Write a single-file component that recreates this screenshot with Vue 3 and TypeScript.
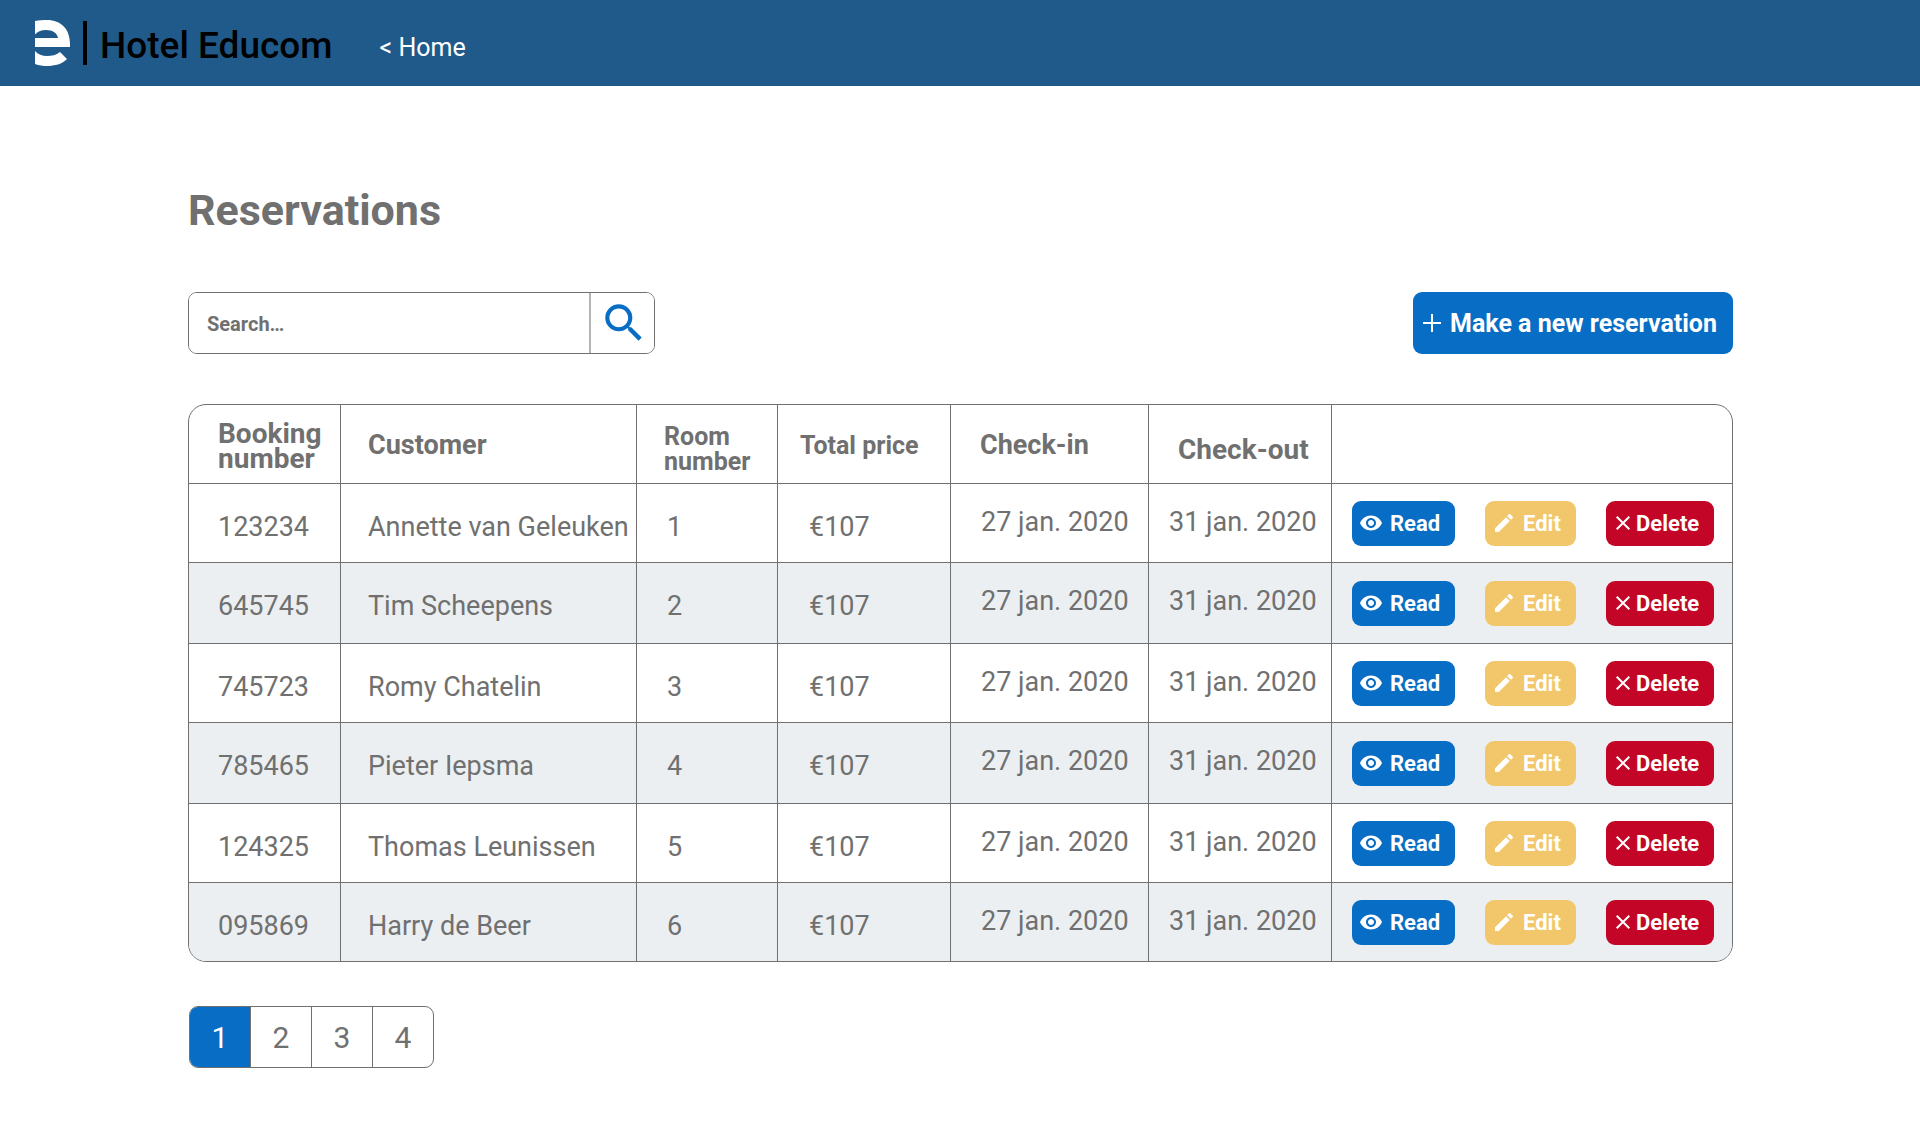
<script setup lang="ts">
interface Reservation {
  booking: string
  customer: string
  room: number
  price: string
  checkIn: string
  checkOut: string
}

const reservations: Reservation[] = [
  ['123234', 'Annette van Geleuken'],
  ['645745', 'Tim Scheepens'],
  ['745723', 'Romy Chatelin'],
  ['785465', 'Pieter Iepsma'],
  ['124325', 'Thomas Leunissen'],
  ['095869', 'Harry de Beer'],
].map(([booking, customer], i) => ({
  booking,
  customer,
  room: i + 1,
  price: '€107',
  checkIn: '27 jan. 2020',
  checkOut: '31 jan. 2020',
}))

const pages: number[] = [1, 2, 3, 4]
const currentPage = 1
</script>

<template>
  <header class="topbar">
    <a class="brand" href="#">
      <svg class="logo" viewBox="0 0 36 46" aria-hidden="true">
        <path d="M0 1C4 0 8 0 12 0C26 0 35 9 35 24V27H0V18H23C22 13 18 10 11 10C6 10 2 12 0 14.500Z" />
        <path d="M0 31C3 34.500 7 36 12 36C17 36 21 35 25 32L32 39C27 44 20 46 12 46C8 46 4 45.500 0 44Z" />
      </svg>
      <span class="divider"></span>
      <span class="brand-name">Hotel Educom</span>
    </a>
    <a class="home" href="#">&lt; Home</a>
  </header>

  <main class="page">
    <h1>Reservations</h1>

    <div class="toolbar">
      <form class="search" role="search" @submit.prevent>
        <input type="text" placeholder="Search…" aria-label="Search reservations" />
        <button type="submit" aria-label="Search">
          <svg viewBox="0 0 24 24" aria-hidden="true">
            <path d="M15.500 14h-.79l-.28-.27A6.471 6.471 0 0 0 16 9.500 6.500 6.500 0 1 0 9.500 16c1.610 0 3.090-.59 4.230-1.570l.27.28v.79l5 4.990L20.490 19l-4.990-5zm-6 0C7.010 14 5 11.990 5 9.500S7.010 5 9.500 5 14 7.010 14 9.500 11.990 14 9.500 14z" />
          </svg>
        </button>
      </form>
      <button class="create" type="button">
        <svg viewBox="0 0 18 18" aria-hidden="true"><path d="M8 0h2v8h8v2h-8v8H8v-8H0V8h8z" /></svg>
        Make a new reservation
      </button>
    </div>

    <table>
      <colgroup>
        <col class="w-booking" />
        <col class="w-customer" />
        <col class="w-room" />
        <col class="w-price" />
        <col class="w-in" />
        <col class="w-out" />
        <col />
      </colgroup>
      <thead>
        <tr>
          <th scope="col" class="booking large">Booking<br />number</th>
          <th scope="col">Customer</th>
          <th scope="col" class="small low">Room<br />number</th>
          <th scope="col" class="price small">Total price</th>
          <th scope="col" class="check-in">Check-in</th>
          <th scope="col" class="check-out large low">Check-out</th>
          <td></td>
        </tr>
      </thead>
      <tbody>
        <tr v-for="r in reservations" :key="r.booking">
          <td class="booking">{{ r.booking }}</td>
          <td>{{ r.customer }}</td>
          <td class="room">{{ r.room }}</td>
          <td class="price">{{ r.price }}</td>
          <td class="check-in">{{ r.checkIn }}</td>
          <td class="check-out">{{ r.checkOut }}</td>
          <td class="actions">
            <div class="buttons">
              <button class="read" type="button">
                <svg viewBox="0 0 24 24" aria-hidden="true">
                  <path d="M12 4.500C7 4.500 2.730 7.610 1 12c1.730 4.390 6 7.500 11 7.500s9.270-3.110 11-7.500c-1.730-4.390-6-7.500-11-7.500zM12 17c-2.760 0-5-2.240-5-5s2.240-5 5-5 5 2.240 5 5-2.240 5-5 5zm0-8c-1.660 0-3 1.340-3 3s1.340 3 3 3 3-1.340 3-3-1.340-3-3-3z" />
                </svg>
                Read
              </button>
              <button class="edit" type="button">
                <svg viewBox="0 0 24 24" aria-hidden="true">
                  <path d="M3 17.250V21h3.750L17.810 9.940l-3.750-3.750L3 17.250zM20.710 7.040a1 1 0 0 0 0-1.410l-2.340-2.340a1 1 0 0 0-1.410 0l-1.830 1.830 3.750 3.750 1.830-1.830z" />
                </svg>
                Edit
              </button>
              <button class="delete" type="button">
                <svg viewBox="0 0 14 14" aria-hidden="true"><path d="M.7.7l12.600 12.600M13.300.7L.7 13.300" /></svg>
                Delete
              </button>
            </div>
          </td>
        </tr>
      </tbody>
    </table>

    <nav class="pagination" aria-label="Pages">
      <a v-for="p in pages" :key="p" href="#" :class="{ current: p === currentPage }">{{ p }}</a>
    </nav>
  </main>
</template>

<style>
body {
  margin: 0;
  background: #fff;
}
</style>

<style scoped>
.topbar,
.page,
button,
input {
  font-family: Roboto, "Liberation Sans", sans-serif;
}

a {
  color: inherit;
  text-decoration: none;
}

button {
  border: 0;
  cursor: pointer;
}

.topbar {
  display: flex;
  align-items: center;
  gap: 47px;
  height: 86px;
  padding: 0 35px;
  background: #1f5a8b;
}

.brand {
  display: flex;
  align-items: center;
  color: #000;
}

.logo {
  width: 36px;
  height: 46px;
  fill: #fff;
}

.divider {
  width: 4px;
  height: 44px;
  margin: 0 13px 0 12px;
  background: #000;
}

.brand-name {
  padding-top: 6px;
  font-size: 37px;
  font-weight: 500;
  line-height: 44px;
}

.home {
  padding-top: 10px;
  color: #fff;
  font-size: 25px;
  line-height: 30px;
}

.page {
  padding: 96px 187px 56px 188px;
  color: #707070;
}

h1 {
  margin: 0 0 54px;
  font-size: 43px;
  line-height: 56px;
}

.toolbar {
  display: flex;
  justify-content: space-between;
  margin-bottom: 50px;
}

.search {
  display: flex;
  box-sizing: border-box;
  width: 467px;
  height: 62px;
  overflow: hidden;
  border: 1px solid #707070;
  border-radius: 9px;
}

.search input {
  flex: 1;
  min-width: 0;
  padding: 2px 18px 0;
  border: 0;
  outline: 0;
  color: #707070;
  font-size: 20px;
  font-weight: 700;
}

.search input::placeholder {
  color: #707070;
  opacity: 1;
}

.search button {
  display: flex;
  align-items: center;
  justify-content: center;
  width: 65px;
  padding: 0 0 0 2px;
  border-left: 2px solid #b4b4b4;
  background: #fff;
}

.search svg {
  width: 50px;
  height: 50px;
  fill: #086dc4;
}

.create {
  display: flex;
  align-items: center;
  gap: 9px;
  height: 62px;
  padding: 0 16px 0 10px;
  border-radius: 9px;
  background: #086dc4;
  color: #fff;
  font-size: 25px;
  font-weight: 700;
}

.create svg {
  width: 18px;
  height: 18px;
  fill: #fff;
}

table {
  width: 100%;
  overflow: hidden;
  border: 1px solid #707070;
  border-radius: 18px;
  border-spacing: 0;
  table-layout: fixed;
  font-size: 27px;
  line-height: 32px;
}

.w-booking { width: 152px; }
.w-customer { width: 296px; }
.w-room { width: 141px; }
.w-price { width: 173px; }
.w-in { width: 198px; }
.w-out { width: 183px; }

th,
td {
  box-sizing: border-box;
  padding: 27px 0 0 27px;
  border-right: 1px solid #707070;
  border-bottom: 1px solid #707070;
  text-align: left;
  vertical-align: top;
  white-space: nowrap;
}

th:last-child,
td:last-child {
  border-right: 0;
}

tbody tr:last-child td {
  border-bottom: 0;
}

thead tr,
tbody tr {
  height: 79px;
}

tbody tr:nth-child(even) {
  height: 81px;
  background: #ebeff2;
}

tbody tr:last-child {
  height: 78px;
}

th {
  padding-top: 3px;
  line-height: 25px;
  vertical-align: middle;
}

th.large {
  font-size: 28px;
}

th.small {
  font-size: 25px;
}

th.low {
  padding-top: 10px;
}

.booking,
.check-in {
  padding-left: 29px;
}

td.room {
  padding-left: 30px;
}

td.price {
  padding-left: 31px;
}

th.price {
  padding-left: 22px;
}

td.check-in,
td.check-out {
  padding-top: 22px;
}

td.check-in {
  padding-left: 30px;
}

td.check-out {
  padding-left: 20px;
}

th.check-out {
  padding-left: 29px;
}

td.actions {
  padding: 0 18px 0 20px;
  vertical-align: middle;
}

.buttons {
  display: flex;
  gap: 30px;
}

.buttons button {
  display: flex;
  align-items: center;
  gap: 7px;
  box-sizing: border-box;
  height: 45px;
  padding: 0 0 0 7px;
  border-radius: 9px;
  color: #fff;
  font-size: 22px;
  font-weight: 700;
}

.buttons svg {
  width: 24px;
  height: 24px;
  fill: #fff;
}

.buttons .read {
  width: 103px;
  background: #086dc4;
}

.buttons .edit {
  width: 91px;
  background: #f2c76b;
}

.buttons .delete {
  gap: 6px;
  width: 108px;
  padding-left: 10px;
  background: #c30628;
}

.buttons .delete svg {
  width: 14px;
  height: 14px;
  stroke: #fff;
  stroke-width: 2;
}

.pagination {
  display: inline-flex;
  margin: 44px 0 0 1px;
  overflow: hidden;
  border: 1px solid #707070;
  border-radius: 9px;
}

.pagination a {
  width: 60px;
  height: 60px;
  font-size: 30px;
  line-height: 62px;
  text-align: center;
}

.pagination a + a {
  border-left: 1px solid #707070;
}

.pagination .current {
  background: #086dc4;
  color: #fff;
}
</style>
